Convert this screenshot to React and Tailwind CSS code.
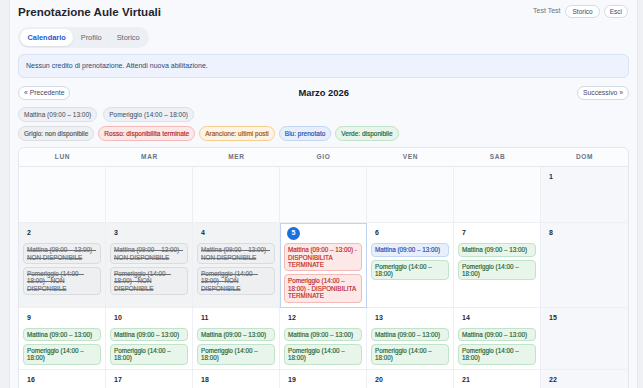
import React from "react";

const slotStyles = {
  gray: "bg-[#eeeff1] border-[#d9dbdf] text-[#6c7077] line-through",
  red: "bg-[#fde8e8] border-[#f4b9b9] text-[#bf1f1f]",
  blue: "bg-[#e7effc] border-[#c3d6f5] text-[#1b49ad]",
  green: "bg-[#e8f5eb] border-[#c1e3c9] text-[#1b6231]",
};

const M = "Mattina (09:00 – 13:00)";
const P = "Pomeriggio (14:00 – 18:00)";

const greenDay = (d) => ({
  d,
  slots: [
    { t: M, v: "green" },
    { t: P, v: "green" },
  ],
});

// settimane di marzo 2026
const weeks = [
  [
    { blank: true },
    { blank: true },
    { blank: true },
    { blank: true },
    { blank: true },
    { blank: true },
    { d: 1, sun: true },
  ],
  [
    { d: 2, past: true, slots: [{ t: M + " - NON DISPONIBILE", v: "gray" }, { t: P + " - NON DISPONIBILE", v: "gray" }] },
    { d: 3, past: true, slots: [{ t: M + " - NON DISPONIBILE", v: "gray" }, { t: P + " - NON DISPONIBILE", v: "gray" }] },
    { d: 4, past: true, slots: [{ t: M + " - NON DISPONIBILE", v: "gray" }, { t: P + " - NON DISPONIBILE", v: "gray" }] },
    { d: 5, today: true, slots: [{ t: M + " - DISPONIBILITA TERMINATE", v: "red" }, { t: P + " - DISPONIBILITA TERMINATE", v: "red" }] },
    { d: 6, slots: [{ t: M, v: "blue" }, { t: P, v: "green" }] },
    greenDay(7),
    { d: 8, sun: true },
  ],
  [greenDay(9), greenDay(10), greenDay(11), greenDay(12), greenDay(13), greenDay(14), { d: 15, sun: true }],
  [greenDay(16), greenDay(17), greenDay(18), greenDay(19), greenDay(20), greenDay(21), { d: 22, sun: true }],
];

const legend = [
  { t: "Grigio: non disponibile", c: "bg-[#eef0f2] border-[#dadde2] text-[#50555d]" },
  { t: "Rosso: disponibilita terminate", c: "bg-[#fde8e8] border-[#f4b9b9] text-[#b01e22]" },
  { t: "Arancione: ultimi posti", c: "bg-[#fff4e3] border-[#f3cf8f] text-[#9a5006]" },
  { t: "Blu: prenotato", c: "bg-[#e7effc] border-[#c3d6f5] text-[#1d4bb0]" },
  { t: "Verde: disponibile", c: "bg-[#e8f5eb] border-[#c1e3c9] text-[#1b6231]" },
];

const Cell = ({ cell, col }) => {
  let bg = "bg-white";
  if (cell.blank) bg = "bg-[#fbfcfe]";
  else if (cell.sun) bg = "bg-[#f6f7fa]";
  else if (cell.past) bg = "bg-[#f2f3f5]";
  return (
    <div
      className={`min-h-[56px] p-[4px] border-b border-[#eceff3] ${
        col < 6 ? "border-r" : ""
      } ${bg} ${cell.today ? "outline outline-1 -outline-offset-1 outline-[#bfd3f3]" : ""}`}
    >
      {!cell.blank && (
        <div className="h-[13px] flex items-center pl-[3px] mb-[3px]">
          {cell.today ? (
            <span className="w-[13px] h-[13px] rounded-full bg-[#1d6fe0] text-white flex items-center justify-center text-[7px] font-bold">
              {cell.d}
            </span>
          ) : (
            <span className="pl-[1px] text-[7px] font-bold text-[#1f2937]">{cell.d}</span>
          )}
        </div>
      )}
      {cell.slots && (
        <div className="flex flex-col gap-[3px]">
          {cell.slots.map((s, i) => (
            <div
              key={i}
              className={`rounded-[4px] border px-[3px] py-[2px] text-[6.3px] leading-[7.4px] [-webkit-text-stroke:0.15px_currentColor] ${slotStyles[s.v]}`}
            >
              {s.t}
            </div>
          ))}
        </div>
      )}
    </div>
  );
};

export default function App() {
  return (
    <div className="flex min-h-[388px] bg-[#eff1f4] font-['Liberation_Sans',Arial,sans-serif]">
      <div className="ml-[9px] w-[629px] bg-[#f8f9fc] border-l border-r border-[#e6e9ee] px-[8px] pt-[4px]">
        {/* header */}
        <div className="flex justify-between items-start">
          <h1 className="text-[11.6px] leading-[15px] font-bold text-[#1f2530]">Prenotazione Aule Virtuali</h1>
          <div className="flex items-center gap-[4px] pt-[1px] pr-[1px]">
            <span className="text-[7px] text-[#6b7280] mr-[1px]">Test Test</span>
            <button className="h-[13px] px-[6px] rounded-full border border-[#d5dbe5] bg-white text-[6.5px] text-[#3d4b66]">
              Storico
            </button>
            <button className="h-[13px] px-[5px] rounded-full border border-[#d5dbe5] bg-white text-[6.5px] text-[#3d4b66]">
              Esci
            </button>
          </div>
        </div>

        {/* tabs */}
        <div className="mt-[8px] inline-flex items-center p-[2px] rounded-full bg-[#eceff4]">
          <span className="h-[17px] px-[7.5px] flex items-center rounded-full bg-white shadow-[0_1px_2px_rgba(0,0,0,0.08)] text-[7.4px] font-bold text-[#1b5ad6]">
            Calendario
          </span>
          <span className="h-[17px] px-[7.5px] flex items-center text-[7.4px] text-[#5c6675]">Profilo</span>
          <span className="h-[17px] px-[7.5px] flex items-center text-[7.4px] text-[#5c6675]">Storico</span>
        </div>

        {/* banner */}
        <div className="mt-[6px] h-[24px] flex items-center px-[7px] rounded-[6px] border border-[#d7e2f5] bg-[#edf2fc] text-[7px] text-[#2e4a74]">
          Nessun credito di prenotazione. Attendi nuova abilitazione.
        </div>

        {/* navigation */}
        <div className="mt-[8px] flex justify-between items-center">
          <button className="h-[14px] px-[5px] rounded-full border border-[#d2d9e3] bg-white text-[6.8px] text-[#3d4b66]">
            « Precedente
          </button>
          <span className="text-[9.4px] font-bold text-[#111827]">Marzo 2026</span>
          <button className="h-[14px] px-[5px] rounded-full border border-[#d2d9e3] bg-white text-[6.8px] text-[#3d4b66]">
            Successivo »
          </button>
        </div>

        {/* shifts */}
        <div className="mt-[7px] flex gap-[6px]">
          <span className="h-[15px] px-[5px] flex items-center rounded-full border border-[#dbe1ea] bg-[#edf0f5] text-[6.5px] text-[#3e4858]">
            {M}
          </span>
          <span className="h-[15px] px-[5px] flex items-center rounded-full border border-[#dbe1ea] bg-[#edf0f5] text-[6.5px] text-[#3e4858]">
            {P}
          </span>
        </div>

        {/* legend */}
        <div className="mt-[4px] flex gap-[4px]">
          {legend.map((l) => (
            <span
              key={l.t}
              className={`h-[15px] px-[5px] flex items-center rounded-full border text-[6.5px] [-webkit-text-stroke:0.15px_currentColor] ${l.c}`}
            >
              {l.t}
            </span>
          ))}
        </div>

        {/* calendar */}
        <div className="mt-[6px] rounded-t-[6px] border border-[#e3e7ee] bg-[#fbfcfe] overflow-hidden">
          <div className="grid grid-cols-7 h-[19px] border-b border-[#e5e8ed]">
            {["LUN", "MAR", "MER", "GIO", "VEN", "SAB", "DOM"].map((d) => (
              <div
                key={d}
                className="flex items-center justify-center text-[6.5px] font-bold tracking-[0.1em] text-[#6b7383]"
              >
                {d}
              </div>
            ))}
          </div>
          {weeks.map((w, wi) => (
            <div key={wi} className="grid grid-cols-7">
              {w.map((c, ci) => (
                <Cell key={ci} cell={c} col={ci} />
              ))}
            </div>
          ))}
        </div>
      </div>
    </div>
  );
}
